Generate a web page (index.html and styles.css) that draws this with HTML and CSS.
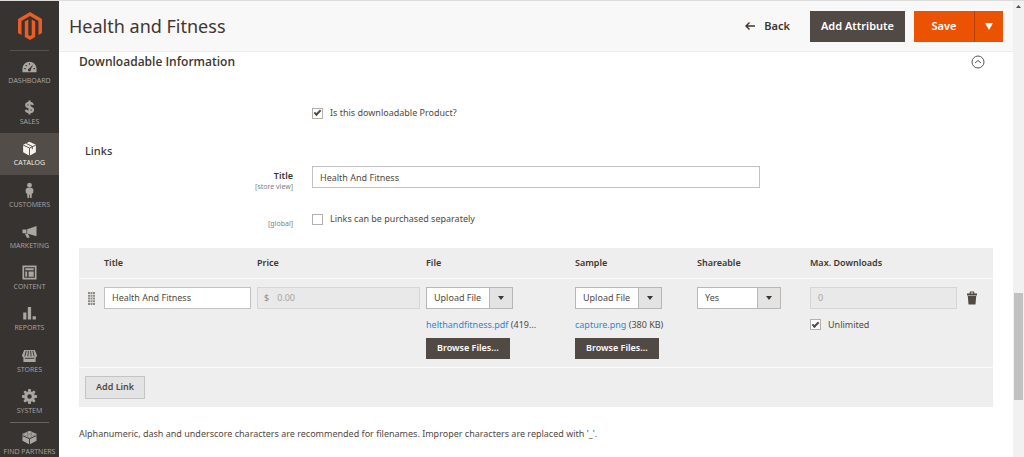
FILE: index.html
```html
<!DOCTYPE html>
<html lang="en">
<head>
<meta charset="utf-8">
<title>Health and Fitness</title>
<link rel="stylesheet" href="styles.css">
</head>
<body>
<div class="app">
  <aside class="sidebar">
    <a class="logo" href="#" aria-label="Home">
      <svg width="24" height="28" viewBox="0 0 24 28"><path fill="#eb5d22" d="M12 0l12 7v14l-3.500 2V9L12 4 3.500 9v14L0 21V7zM10.300 7.500v15.500l1.700 1 1.700-1V7.500L17.200 9.500V25L12 28 6.800 25V9.500z"/></svg>
    </a>
    <nav class="menu">
      <a class="item" href="#"><svg class="icon" viewBox="0 0 16 16"><path d="M8 3a7.500 7.500 0 0 0-7.500 7.500V14h15v-3.500A7.500 7.500 0 0 0 8 3z"/><path class="cut" d="M12 5.500L9.500 11a1.600 1.600 0 1 1-1.800-1zM2.500 9.500h1.500v1.300H2.500zM4.300 6l1.200 1-.9.900-1-1zM7.400 4.500h1.200V6H7.400zM12.300 9.500h1.500v1.300h-1.500z"/></svg><span>DASHBOARD</span></a>
      <a class="item" href="#"><svg class="icon" viewBox="0 0 16 16"><path fill="none" stroke="currentColor" stroke-width="2.400" d="M11.600 5.300C11.100 3.700 9.700 3 8 3 5.900 3 4.500 4 4.500 5.300 4.500 8.800 11.700 7 11.700 10.500c0 1.600-1.500 2.600-3.700 2.600-2 0-3.500-.9-3.900-2.600M8 .5v15"/></svg><span>SALES</span></a>
      <a class="item active" href="#" aria-current="page"><svg class="icon" viewBox="0 0 16 16"><path d="M8 .8l6.800 3.200v8L8 15.600 1.200 12V4z"/><path class="line" d="M1.200 4.300L8 7.500l6.800-3.200M8 7.500v8.300M4.500 2.600l6.500 3.200v3"/></svg><span>CATALOG</span></a>
      <a class="item" href="#"><svg class="icon" viewBox="0 0 16 16"><circle cx="8" cy="2.300" r="2.500"/><path d="M6 5h4q1.800.3 2.200 2.300l-.4 3.800-1.200-.3L10.200 16H8.400v-3.500h-.8V16H5.800l-.4-5.200-1.200.3L3.800 7.300Q4.200 5.300 6 5z"/></svg><span>CUSTOMERS</span></a>
      <a class="item" href="#"><svg class="icon" viewBox="0 0 16 16"><path d="M5.500 5.500L15.500 2v11L5.500 10zM.5 5.800h4.300v4H.5zM3 10.500h3.300l2 3.800-2.800.5z"/></svg><span>MARKETING</span></a>
      <a class="item" href="#"><svg class="icon" viewBox="0 0 16 16"><path fill-rule="evenodd" d="M.500.500h15v15H.500zM2.300 2.300v11.400h11.400V2.300z"/><path d="M3.500 3.500h9v2.200h-9zM3.500 7h2v5.500h-2zM7 7h5.500v5.500H7z"/></svg><span>CONTENT</span></a>
      <a class="item" href="#"><svg class="icon" viewBox="0 0 16 16"><path d="M1.300 7h3.400v7.500H1.300zM6.200 1h3.500v13.500H6.200zM11.300 11h3.500v3.500h-3.500z"/></svg><span>REPORTS</span></a>
      <a class="item" href="#"><svg class="icon" viewBox="0 0 16 16"><path d="M2.300 2h11.400L16 8q0 1.800-1.500 2v5h-13v-5Q0 9.800 0 8z"/><path class="line" d="M4.500 3L3 9M6.800 3l-.5 6M9.200 3l.5 6M11.500 3L13 9M3 11h10"/></svg><span>STORES</span></a>
      <a class="item" href="#"><svg class="icon" viewBox="0 0 16 16"><circle cx="8" cy="8" r="4" fill="none" stroke="currentColor" stroke-width="3.200"/><path d="M6.700 0h2.600l.5 3H6.200zM6.700 16h2.600l.5-3H6.200zM0 6.700v2.600l3 .5V6.200zM16 6.700v2.600l-3 .5V6.200zM1.500 3.200l1.700-1.700 2.500 1.700-2.500 2.500zM14.500 3.200l-1.700-1.700-2.500 1.700 2.500 2.500zM1.500 12.800l1.700 1.700 2.500-1.700-2.500-2.500zM14.500 12.800l-1.700 1.700-2.500-1.700 2.500-2.500z"/></svg><span>SYSTEM</span></a>
    </nav>
    <a class="item partners" href="#"><svg class="icon" viewBox="0 0 16 16"><path d="M8 .8L15.500 4v7.500L8 15.500.5 11.500V4z"/><path class="line" d="M.5 6L8 9.300 15.500 6M8 9.300v6.500"/><g class="studs"><ellipse cx="8" cy="2.300" rx="2.200" ry="1.200"/><ellipse cx="4" cy="4.300" rx="2.200" ry="1.200"/><ellipse cx="12" cy="4.300" rx="2.200" ry="1.200"/><ellipse cx="8" cy="6.400" rx="2.200" ry="1.200"/></g></svg><span>FIND PARTNERS</span></a>
  </aside>

  <main class="main">
    <header class="header">
      <h1>Health and Fitness</h1>
      <div class="actions">
        <button class="back" type="button"><svg width="10" height="8" viewBox="0 0 10 8"><path fill="none" stroke="currentColor" stroke-width="1.400" d="M10 4H1M4.500.5L1 4l3.500 3.500"/></svg>Back</button>
        <button class="dark large" type="button">Add Attribute</button>
        <div class="split">
          <button class="save" type="button">Save</button>
          <button class="more" type="button" aria-label="More save options"><svg width="8" height="7" viewBox="0 0 8 7"><path fill="#fff" d="M0 0h8L4 7z"/></svg></button>
        </div>
      </div>
    </header>

    <section class="content">
      <div class="section-head">
        <h2>Downloadable Information</h2>
        <button class="collapse" type="button" aria-label="Collapse section"><svg width="14" height="14" viewBox="0 0 14 14" fill="none" stroke="#5a5550"><circle cx="7" cy="7" r="6"/><path d="M4 8l3-2.500L10 8"/></svg></button>
      </div>

      <div class="field first">
        <div class="control check"><input type="checkbox" id="is-downloadable" checked><label for="is-downloadable">Is this downloadable Product?</label></div>
      </div>
      <h3>Links</h3>
      <div class="field">
        <div class="caption"><label for="links-title">Title</label><small>[store view]</small></div>
        <div class="control"><input class="text" type="text" id="links-title" value="Health And Fitness"></div>
      </div>
      <div class="field separate">
        <div class="caption"><small>[global]</small></div>
        <div class="control check"><input type="checkbox" id="separately"><label for="separately">Links can be purchased separately</label></div>
      </div>

      <table class="links">
        <colgroup><col class="c-drag"><col class="c-title"><col class="c-price"><col class="c-file"><col class="c-sample"><col class="c-share"><col class="c-max"><col class="c-delete"></colgroup>
        <thead>
          <tr><th></th><th>Title</th><th>Price</th><th>File</th><th>Sample</th><th>Shareable</th><th>Max. Downloads</th><th></th></tr>
        </thead>
        <tbody>
          <tr>
            <td class="drag"><svg width="7" height="13" viewBox="0 0 7 13" fill="#8f8c89"><path d="M0 0h2v2H0zM2.500 0h2v2h-2zM5 0h2v2H5zM0 2.800h2v2H0zM2.500 2.800h2v2h-2zM5 2.800h2v2H5zM0 5.500h2v2H0zM2.500 5.500h2v2h-2zM5 5.500h2v2H5zM0 8.300h2v2H0zM2.500 8.300h2v2h-2zM5 8.300h2v2H5zM0 11h2v2H0zM2.500 11h2v2h-2zM5 11h2v2H5z"/></svg></td>
            <td><input class="text" type="text" aria-label="Title" value="Health And Fitness"></td>
            <td><div class="price"><span>$</span><input type="text" aria-label="Price" value="0.00" disabled></div></td>
            <td>
              <span class="select upload"><select aria-label="File"><option>Upload File</option><option>URL</option></select></span>
              <p class="filename"><a href="#">helthandfitness.pdf</a> (419...</p>
              <button class="dark" type="button">Browse Files...</button>
            </td>
            <td>
              <span class="select upload"><select aria-label="Sample"><option>Upload File</option><option>URL</option></select></span>
              <p class="filename"><a href="#">capture.png</a> (380 KB)</p>
              <button class="dark" type="button">Browse Files...</button>
            </td>
            <td><span class="select"><select aria-label="Shareable"><option>Yes</option><option>No</option><option>Use config</option></select></span></td>
            <td>
              <input class="text" type="text" aria-label="Max. Downloads" value="0" disabled>
              <div class="check unlimited"><input type="checkbox" id="unlimited" checked><label for="unlimited">Unlimited</label></div>
            </td>
            <td class="delete"><button type="button" aria-label="Delete"><svg width="10" height="14" viewBox="0 0 10 14" fill="#514943"><path d="M0 2.500h2.500L3 .5h4l.5 2H10v2H0zM4 1.500l-.2 1h2.400l-.2-1zM.8 5h8.400l-.7 8.500h-7z" fill-rule="evenodd"/></svg></button></td>
          </tr>
        </tbody>
        <tfoot>
          <tr><td colspan="8"><button class="add" type="button">Add Link</button></td></tr>
        </tfoot>
      </table>
      <p class="note">Alphanumeric, dash and underscore characters are recommended for filenames. Improper characters are replaced with '_'.</p>
    </section>
  </main>

  <div class="scrollbar" aria-hidden="true">
    <svg class="up" width="5" height="3" viewBox="0 0 5 3"><path fill="#505050" d="M0 3h5L2.500 0z"/></svg>
    <div class="track"><div class="thumb"></div></div>
  </div>
</div>
</body>
</html>
```

FILE: styles.css
```css
* { box-sizing: border-box; }
body {
  margin: 0;
  font: 9px/14px "Noto Sans", "Open Sans", sans-serif;
  color: #41362f;
  background: #fff;
}
h1, h2, h3, p { margin: 0; }
button, input, select { font: inherit; color: inherit; margin: 0; border-radius: 0; }
button { border: 0; padding: 0; background: none; cursor: pointer; white-space: nowrap; }
svg { display: block; }
.app { display: flex; height: 100vh; overflow: hidden; border-top: 1px solid #dcdcdc; }

.sidebar { display: flex; flex-direction: column; flex: none; width: 59px; background: #373330; }
.logo { display: flex; justify-content: center; margin: 0 10px; padding: 11px 0 10px; border-bottom: 1px solid #57524e; }
.menu { display: flex; flex-direction: column; flex: 1; }
.item {
  display: flex; flex-direction: column; align-items: center; flex: 1; gap: 2px;
  padding-top: 8px; color: #aaa6a0; text-decoration: none;
  font-family: "Open Sans", "Noto Sans", sans-serif;
  font-size: 7px; line-height: 10px; white-space: nowrap;
}
.item.active { background: #524d49; color: #f7f3eb; }
.icon { width: 15px; height: 15px; fill: currentColor; }
.icon .cut { fill: #373330; }
.icon .line { fill: none; stroke: #373330; stroke-width: 1; }
.active .icon .line { stroke: #524d49; }
.studs { fill: #c4c0ba; stroke: #373330; stroke-width: .4; }
.partners { flex: none; height: 35px; position: relative; padding-top: 8px; }
.partners::before { content: ""; position: absolute; top: 0; left: 10px; right: 10px; border-top: 1px solid #686460; }

.main { flex: 1; min-width: 0; }
.header {
  display: flex; align-items: center; justify-content: space-between;
  height: 51px; padding: 0 10px; background: #f8f8f8; border-bottom: 1px solid #ececec;
}
h1 { font-size: 18px; line-height: 24px; font-weight: 400; }
.actions { display: flex; align-items: center; font-weight: 600; }
.actions button { font-size: 11px; }
.back { display: flex; align-items: center; gap: 9px; margin-right: 20px; }
.dark { height: 21px; padding: 0 11px; background: #514943; color: #fff; font-weight: 600; }
.large { height: 31px; margin-right: 9px; }
.split { display: flex; height: 31px; background: #eb5202; color: #fff; }
.save { width: 61px; border-right: 1px solid #b84002; }
.more { display: flex; align-items: center; justify-content: center; width: 28px; }

.content { padding: 0 20px; }
.section-head { display: flex; align-items: center; justify-content: space-between; height: 20px; padding-right: 8px; }
h2 { font-family: "Open Sans", "Noto Sans", sans-serif; font-size: 12px; line-height: 16px; font-weight: 600; }
h3 { padding: 0 6px; font-size: 11px; line-height: 16px; font-weight: 500; }
.field { display: grid; grid-template-columns: 214px 49%; column-gap: 19px; margin-top: 7px; }
.field.first { margin: 34px 0 23px; }
.control { grid-column: 2; }
.caption { text-align: right; font-weight: 600; padding-top: 4px; line-height: 12px; }
.caption small { display: block; font-size: 7px; line-height: 10px; font-weight: 400; color: #808080; }
.field.separate { margin-top: 20px; }
.separate .caption { padding-top: 7px; }
.check { display: flex; align-items: center; gap: 7px; height: 14px; color: #514943; }
.check input {
  appearance: none; width: 11px; height: 11px; border: 1px solid #b3b0ad; background: #fff;
  display: grid; place-items: center;
}
.check input:checked::before {
  content: ""; width: 7px; height: 4px; margin-bottom: 2px;
  border: solid #514943; border-width: 0 0 2px 2px; box-sizing: border-box; transform: rotate(-45deg);
}
.text { display: block; width: 100%; height: 22px; padding: 0 7px; border: 1px solid #c2c2c2; background: #fff; color: #514943; }
.text:disabled { background: #e9e9e9; border-color: #d6d6d6; color: #a8a5a2; }

.links { width: 100%; margin-top: 19px; table-layout: fixed; border-collapse: collapse; background: #eee; }
.c-drag { width: 22px; }
.c-title, .c-max { width: 153px; }
.c-price { width: 169px; }
.c-file { width: 149px; }
.c-sample { width: 122px; }
.c-share { width: 113px; }
.c-delete { width: 33px; }
.links th { height: 30px; padding: 0 3px; text-align: left; font-weight: 600; }
.links td { padding: 8px 3px; vertical-align: top; border-top: 1px solid #fafafa; }
.links tfoot td { padding: 8px 6px; }
.links .drag { padding: 13px 0 0 9px; }
.links .delete { padding: 12px 0 0 7px; }
.price { display: flex; align-items: center; gap: 8px; height: 22px; padding: 0 6px; border: 1px solid #d6d6d6; background: #e9e9e9; color: #8f8c89; }
.price input { flex: 1; min-width: 0; border: 0; padding: 0; background: none; color: #a8a5a2; }
.select { display: block; position: relative; width: 84px; height: 22px; color: #514943; }
.upload { width: 87px; }
.select select { appearance: none; width: 100%; height: 22px; padding: 0 22px 0 7px; border: 1px solid #b9b7b5; background: #fff; }
.select::before { content: ""; position: absolute; top: 1px; right: 1px; bottom: 1px; width: 22px; background: #e3e3e3; border-left: 1px solid #b9b7b5; pointer-events: none; }
.select::after { content: ""; position: absolute; top: 9px; right: 9px; border: solid transparent; border-width: 4px 3px 0; border-top-color: #41362f; pointer-events: none; }
.filename { margin: 9px 0 6px; white-space: nowrap; color: #514943; }
.filename a { color: #2f86d6; text-decoration: none; }
.unlimited { margin-top: 9px; }
.add { display: block; height: 23px; padding: 0 10px; border: 1px solid #c4c4c4; background: #e3e3e3; font-weight: 600; color: #514943; }
.note { margin-top: 20px; color: #514943; }

.scrollbar { display: flex; flex-direction: column; align-items: center; flex: none; width: 11px; background: #f1f1f1; }
.up { margin: 4px 0; flex: none; }
.track { flex: 1; width: 9px; display: grid; grid-template-rows: 281fr 107fr 57fr; }
.thumb { grid-row: 2; background: #c1c1c1; }
```
